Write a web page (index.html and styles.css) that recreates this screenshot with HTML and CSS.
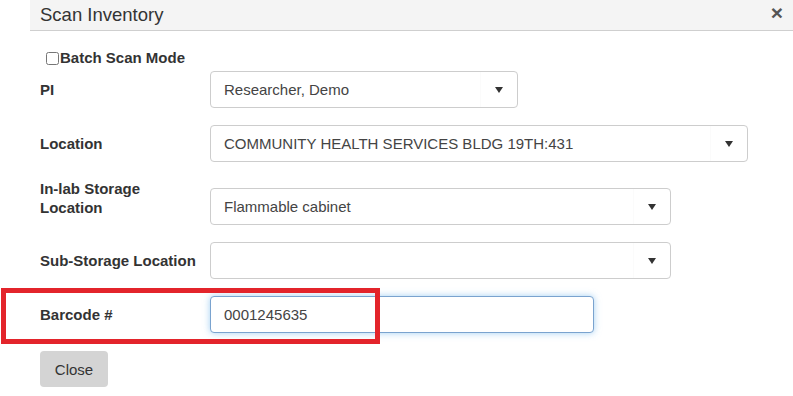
FILE: index.html
```html
<!DOCTYPE html>
<html lang="en">
<head>
    <meta charset="UTF-8">
    <meta name="viewport" content="width=device-width, initial-scale=1.0">
    <title>Scan Inventory</title>
    <link rel="stylesheet" href="styles.css">
</head>
<body>
    <div class="modal">
        <div class="modal-header">
            <h4 class="modal-title">Scan Inventory</h4>
            <button class="close">&times;</button>
        </div>
        <div class="modal-body">
            <div class="batch">
                <label><input type="checkbox">Batch Scan Mode</label>
            </div>

            <!-- PI -->
            <div class="form-row">
                <label class="field-label">PI</label>
                <div class="fake-select w-pi">
                    <span class="value">Researcher, Demo</span>
                    <span class="arrow-box"><span class="arrow"></span></span>
                </div>
            </div>

            <!-- Location -->
            <div class="form-row">
                <label class="field-label">Location</label>
                <div class="fake-select w-location">
                    <span class="value">COMMUNITY HEALTH SERVICES BLDG 19TH:431</span>
                    <span class="arrow-box"><span class="arrow"></span></span>
                </div>
            </div>

            <!-- In-lab storage -->
            <div class="form-row two-line">
                <label class="field-label">In-lab Storage<br>Location</label>
                <div class="fake-select w-storage">
                    <span class="value">Flammable cabinet</span>
                    <span class="arrow-box"><span class="arrow"></span></span>
                </div>
            </div>

            <!-- Sub storage -->
            <div class="form-row">
                <label class="field-label">Sub-Storage Location</label>
                <div class="fake-select w-storage">
                    <span class="value"></span>
                    <span class="arrow-box"><span class="arrow"></span></span>
                </div>
            </div>

            <!-- Barcode -->
            <div class="form-row barcode-row">
                <label class="field-label">Barcode #</label>
                <input class="text-input" type="text" value="0001245635">
                <div class="highlight"></div>
            </div>

            <button class="btn-close">Close</button>
        </div>
    </div>
</body>
</html>
```

FILE: styles.css
```css
body {
    margin: 0;
    padding: 0;
    background-color: #fff;
    font-family: "Liberation Sans", Arial, Helvetica, sans-serif;
    font-size: 15px;
    color: #333;
    overflow: hidden;
}
.modal {
    margin-left: 30px;
}
.modal-header {
    height: 31px;
    box-sizing: border-box;
    padding: 0 10px;
    background-color: #f4f4f4;
    border-bottom: 1px solid #cfcfcf;
    display: flex;
    justify-content: space-between;
    align-items: center;
}
.modal-title {
    margin: 0;
    font-size: 18.5px;
    font-weight: normal;
    color: #333;
    line-height: 26px;
}
.close {
    background: none;
    border: none;
    padding: 0;
    margin-right: 0;
    margin-top: -4px;
    font-family: "Liberation Sans", Arial, sans-serif;
    font-size: 21px;
    font-weight: bold;
    color: #555;
    line-height: 22px;
    cursor: pointer;
}
.modal-body {
    padding: 0 10px;
}
.batch {
    margin-top: 18px;
    margin-bottom: 4px;
    line-height: 18px;
}
.batch label {
    display: flex;
    align-items: center;
    font-weight: bold;
    padding-left: 6px;
}
.batch input {
    width: 13px;
    height: 13px;
    margin: 0 1px 0 0;
}
.form-row {
    display: flex;
    align-items: center;
    margin-bottom: 17px;
    position: relative;
}
.form-row.two-line {
    align-items: flex-start;
}
.form-row.two-line .fake-select {
    margin-top: 9px;
}
.field-label {
    width: 170px;
    flex-shrink: 0;
    font-weight: bold;
    line-height: 19px;
}
.fake-select {
    height: 37px;
    box-sizing: border-box;
    border: 1px solid #cdcdcd;
    border-radius: 4px;
    background-color: #fff;
    display: flex;
    align-items: center;
    justify-content: space-between;
    color: #444;
    font-size: 15px;
}
.fake-select .value {
    padding-left: 13px;
    white-space: nowrap;
}
.arrow-box {
    width: 36px;
    height: 100%;
    border-left: 1px solid #fbfbfb;
    display: flex;
    align-items: center;
    justify-content: center;
}
.arrow {
    width: 0;
    height: 0;
    border-left: 4px solid transparent;
    border-right: 4px solid transparent;
    border-top: 6px solid #333;
}
.w-pi {
    width: 308px;
}
.w-location {
    width: 538px;
}
.w-storage {
    width: 461px;
}
.text-input {
    width: 384px;
    height: 37px;
    box-sizing: border-box;
    padding: 0 13px;
    border: 1px solid #7aa3cf;
    border-radius: 4px;
    box-shadow: 0 0 7px rgba(102, 175, 233, 0.6);
    font-family: "Liberation Sans", Arial, sans-serif;
    font-size: 15px;
    color: #444;
    outline: none;
}
/* red annotation box around the barcode field */
.highlight {
    position: absolute;
    left: -39px;
    top: -8px;
    width: 379px;
    height: 56px;
    box-sizing: border-box;
    border: 5px solid #e3242b;
    pointer-events: none;
}
.btn-close {
    margin-top: 1px;
    width: 68px;
    height: 36px;
    background-color: #d4d4d4;
    border: none;
    border-radius: 4px;
    font-family: "Liberation Sans", Arial, sans-serif;
    font-size: 15px;
    color: #333;
    cursor: pointer;
}
.btn-close:hover {
    background-color: #c4c4c4;
}
```
